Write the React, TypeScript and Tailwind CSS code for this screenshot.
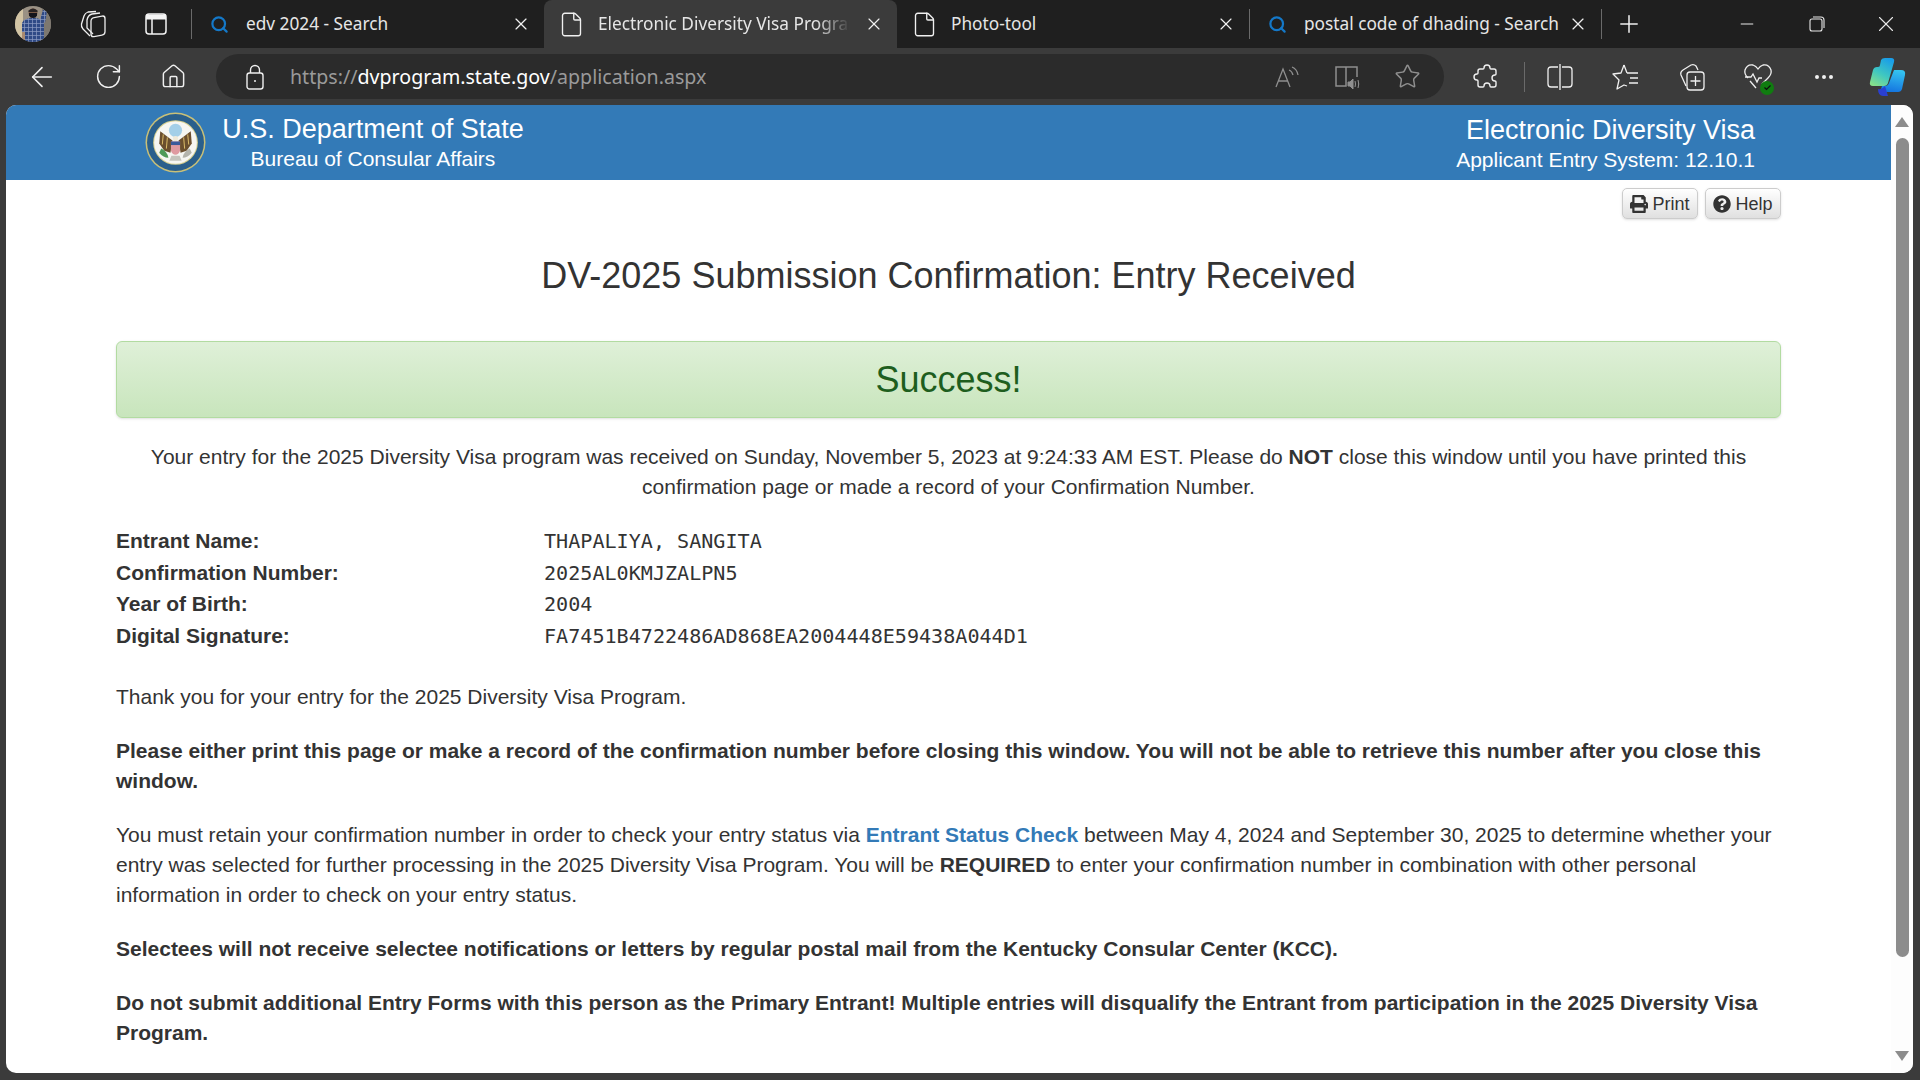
import React from 'react';
import { ArrowLeft, RotateCw, Home, Star, Search, X, Plus, Minus, File, Ellipsis } from 'lucide-react';
import { FaPrint, FaQuestionCircle } from 'react-icons/fa';

// Small tab shown in the browser strip
const Tab = ({ title, kind, width, active }: { title: string; kind: 'search' | 'file'; width: number; active?: boolean }) => (
  <div
    className={`relative flex h-12 shrink-0 items-center rounded-t-lg ${active ? 'bg-[#3b3b3b]' : ''}`}
    style={{ width }}
  >
    <div className="flex w-[54px] shrink-0 justify-center">
      {kind === 'search' ? (
        <Search className="h-[19px] w-[19px] text-[#1478c8]" strokeWidth={2.8} />
      ) : (
        <File className="h-[27px] w-[27px] text-[#f0f0f0]" strokeWidth={1.2} />
      )}
    </div>
    <span
      className={`min-w-0 flex-1 overflow-hidden whitespace-nowrap text-[17.25px] text-[#e6e6e6] ${active ? '[mask-image:linear-gradient(to_right,black_84%,transparent_97%)]' : ''}`}
    >
      {title}
    </span>
    <X className="ml-[6px] mr-[13px] h-[20px] w-[20px] shrink-0 text-[#f0f0f0]" strokeWidth={1.4} />
  </div>
);

const Sep = ({ h = 'h-[30px]' }: { h?: string }) => <div className={`w-px shrink-0 bg-[#6a6a6a] ${h}`} />;

const Box = ({ w, className = '', children }: { w: number; className?: string; children: React.ReactNode }) => (
  <div className={`flex shrink-0 items-center justify-center ${className}`} style={{ width: w }}>
    {children}
  </div>
);

const Avatar = () => (
  <svg width="36" height="36" viewBox="0 0 36 36">
    <defs>
      <clipPath id="av">
        <circle cx="18" cy="18" r="18" />
      </clipPath>
      <pattern id="plaid" width="4" height="4" patternUnits="userSpaceOnUse">
        <rect width="4" height="4" fill="#2f4a86" />
        <path d="M0 1.500h4M1.500 0v4" stroke="#8d9cc4" strokeWidth="0.7" />
      </pattern>
    </defs>
    <g clipPath="url(#av)">
      <rect width="36" height="36" fill="#9a9184" />
      <rect width="8" height="36" fill="#d2c4a4" />
      <rect x="27" width="9" height="36" fill="#7d7870" />
      <path d="M7 36V17q2-5 11-5t11 5v19z" fill="url(#plaid)" />
      <path d="M25 14l3-10 4 1-2 12z" fill="url(#plaid)" />
      <path d="M7 26h3v10H7z" fill="#a88a70" />
      <circle cx="18" cy="7" r="4.500" fill="#7b5a46" />
      <path d="M14 7h8v2.500q-1 2.500-4 2.500t-4-2.500z" fill="#15151c" />
      <path d="M13 5q5-5 10 0l-1 1h-8z" fill="#2a2424" />
    </g>
  </svg>
);

const Seal = () => (
  <svg width="61" height="61" viewBox="0 0 60 60">
    <circle cx="30" cy="30" r="29.500" fill="#c9c078" />
    <circle cx="30" cy="30" r="28" fill="#2a5f8c" />
    <circle cx="30" cy="30" r="22" fill="#d6cf8e" />
    <circle cx="30" cy="30" r="21" fill="#f6f6f2" />
    <circle cx="30" cy="18" r="6.500" fill="#a3cfe8" />
    <path d="M27 28 L15 19 L14 31 L19 38 L25 40z" fill="#6b4f2e" />
    <path d="M33 28 L45 19 L46 31 L41 38 L35 40z" fill="#6b4f2e" />
    <path d="M18 22l-1 10M22 25l-1 11M42 22l1 10M38 25l1 11" stroke="#d8b968" strokeWidth="1" />
    <circle cx="30" cy="26" r="2.500" fill="#efe9d8" />
    <path d="M25.500 29h9v9q-1.500 4-4.500 4t-4.500-4z" fill="#df9aa0" />
    <rect x="25.500" y="29" width="9" height="3.500" fill="#3a5a9a" />
    <path d="M16 36q6 3 7 9-5 0-9-5z" fill="#4f9a58" />
    <path d="M44 36q-6 3-7 9 5 0 9-5z" fill="#b4b4ac" />
    <path d="M26 43h8l2 5h-12z" fill="#c4c4bc" />
  </svg>
);

const Copilot = () => (
  <svg width="38" height="40" viewBox="0 0 38 40">
    <defs>
      <linearGradient id="cpL" x1="0.7" y1="0" x2="0.2" y2="1">
        <stop offset="0" stopColor="#1a9ee8" />
        <stop offset="0.55" stopColor="#40c8c0" />
        <stop offset="1" stopColor="#86e08a" />
      </linearGradient>
      <linearGradient id="cpR" x1="0.6" y1="0" x2="0.4" y2="1">
        <stop offset="0" stopColor="#35c4f0" />
        <stop offset="1" stopColor="#1474e0" />
      </linearGradient>
    </defs>
    <path d="M13 3q1-2 4-2h6q4 0 3 4l-6 21q-1 3-4 3H5q-4 0-3-4l3-12q1-3 4-3h1q2 0 2-2z" fill="url(#cpL)" />
    <path d="M26 13h7q5 0 4 5l-3 14q-1 3-4 3H15q-3 0-2-3l1-3h3q3 0 4-3z" fill="url(#cpR)" />
    <path d="M10 32q4 1 7-3l3 10h-5q-5 0-5-7z" fill="#2a3fd0" />
  </svg>
);

const Row = ({ label, value }: { label: string; value: string }) => (
  <div className="grid h-[31.5px] grid-cols-[428px_1fr] leading-[31.5px]">
    <b className="font-bold">{label}</b>
    <span className="pt-px font-['DejaVu_Sans_Mono',monospace] text-[20.1px]">{value}</span>
  </div>
);

export default function App() {
  return (
    <div className="flex h-[1080px] w-[1920px] flex-col overflow-hidden bg-[#3b3b3b] font-['Noto_Sans',sans-serif]">
      {/* tab strip */}
      <div className="flex h-12 shrink-0 items-center bg-[#1f1f1f]">
        <div className="ml-[15px] flex w-[36px] shrink-0">
          <Avatar />
        </div>
        <Box w={84}>
          <svg width="26" height="28" viewBox="0 0 26 28" fill="none" stroke="#efefef" strokeWidth="1.3">
            <path d="M10 26 L3 19 Q1 17 1.500 14 L4 6 Q5 3 8 2 L16 1.500" />
            <path d="M13 24 L7 18 L7 10 Q8 5 12 4 L20 3" />
            <rect x="11" y="7" width="14" height="19" rx="3" transform="skewY(-10) translate(0 3)" />
          </svg>
        </Box>
        <Box w={42}>
          <svg width="24" height="24" viewBox="0 0 24 24" fill="none" stroke="#f4f4f4" strokeWidth="1.5">
            <rect x="2" y="2" width="20" height="20" rx="3" />
            <path d="M2 5h20" strokeWidth="5" />
            <path d="M8 7v15" />
          </svg>
        </Box>
        <div className="ml-[14px]"><Sep /></div>
        <Tab title="edv 2024 - Search" kind="search" width={352} />
        <Tab title="Electronic Diversity Visa Program" kind="file" width={353} active />
        <Tab title="Photo-tool" kind="file" width={352} />
        <Sep />
        <Tab title="postal code of dhading - Search" kind="search" width={351} />
        <Sep />
        <Box w={54}>
          <Plus className="h-7 w-7 text-[#f0f0f0]" strokeWidth={1.3} />
        </Box>
        <div className="ml-[56px] flex">
          <Box w={70}>
            <Minus className="h-5 w-5 text-[#e8e8e8]" strokeWidth={1.2} />
          </Box>
          <Box w={69}>
            <svg width="16" height="16" viewBox="0 0 16 16" fill="none" stroke="#e8e8e8" strokeWidth="1.1">
              <rect x="1" y="3" width="12" height="12" rx="2" />
              <path d="M4 1h8q3 0 3 3v8" />
            </svg>
          </Box>
          <Box w={69}>
            <X className="h-[26px] w-[26px] text-[#e8e8e8]" strokeWidth={1} />
          </Box>
        </div>
      </div>

      {/* toolbar */}
      <div className="flex h-[57px] shrink-0 items-center pl-[9px] text-[#f0f0f0]">
        <Box w={66}><ArrowLeft className="h-8 w-8" strokeWidth={1.2} /></Box>
        <Box w={66}><RotateCw className="h-[29px] w-[29px]" strokeWidth={1.2} /></Box>
        <Box w={64}><Home className="h-[27px] w-[27px]" strokeWidth={1.3} /></Box>
        <div className="ml-[11px] flex h-[45px] w-[1228px] shrink-0 items-center rounded-full bg-[#2b2b2b]">
          <Box w={74} className="pl-[4px]">
            <svg width="18" height="26" viewBox="0 0 18 26" fill="none" stroke="currentColor" strokeWidth="1.4">
              <rect x="1" y="9" width="16" height="16" rx="2.500" />
              <path d="M4.500 9V6a4.500 4.500 0 0 1 9 0v3" />
              <circle cx="9" cy="17" r="1" fill="currentColor" stroke="none" />
            </svg>
          </Box>
          <div className="min-w-0 flex-1 whitespace-nowrap text-[19.6px] text-[#9a9a9a]">
            https://<span className="text-white">dvprogram.state.gov</span>/application.aspx
          </div>
          <div className="flex items-center pr-[7px] text-[#8f8f8f]">
            <Box w={60}>
              <svg width="26" height="26" viewBox="0 0 26 26" fill="none" stroke="currentColor" strokeWidth="1.300">
                <path d="M2 23 L9 5 L16 23 M4.500 17h9" />
                <path d="M15 6q3 1 4 5M18 3q5 2 6 8" />
              </svg>
            </Box>
            <Box w={60}>
              <svg width="28" height="28" viewBox="0 0 28 28" fill="none" stroke="currentColor" strokeWidth="1.500">
                <path d="M13 23H3V4h10v19zM13 4h11v10" />
                <path d="M15 19h2l3-3v10l-3-3h-2zM22 18q1 3 0 6M25 17q1.500 4 0 8" fill="currentColor" strokeWidth="1" />
              </svg>
            </Box>
            <Box w={60}><Star className="h-[27px] w-[27px]" strokeWidth={1.3} /></Box>
          </div>
        </div>
        <Box w={80} className="pl-[6px]">
          <svg width="28" height="28" viewBox="0 0 28 28" fill="none" stroke="currentColor" strokeWidth="1.400">
            <path d="M11 5a3 3 0 0 1 6 0q0 1 1 1h3q2 0 2 2v3q0 1-1 1a3 3 0 0 0 0 6q1 0 1 1v3q0 2-2 2h-3q-1 0-1-1a3 3 0 0 0-6 0q0 1-1 1H7q-2 0-2-2v-4q0-1-1-1a3 3 0 0 1 0-6q1 0 1-1V8q0-2 2-2h3q1 0 1-1z" />
          </svg>
        </Box>
        <Sep />
        <Box w={70}>
          <svg width="26" height="28" viewBox="0 0 26 28" fill="none" stroke="currentColor" strokeWidth="1.300">
            <path d="M11 4H4Q1 4 1 7v14q0 3 3 3h7M15 4h7q3 0 3 3v14q0 3-3 3h-7M13 1v26" />
          </svg>
        </Box>
        <Box w={62}>
          <svg width="28" height="28" viewBox="0 0 28 28" fill="none" stroke="currentColor" strokeWidth="1.300">
            <path d="M12 2l3 8M12 2L9 10 1 11l6 6-2 9 7-4 3 1" strokeLinejoin="round" />
            <path d="M15 10h11M18 15h8M17 20h9" />
          </svg>
        </Box>
        <Box w={70}>
          <svg width="28" height="30" viewBox="0 0 28 30" fill="none" stroke="currentColor" strokeWidth="1.300">
            <path d="M8 24 L3 13 Q2 10 5 8 L13 3 Q16 2 18 4 L20 8" />
            <rect x="9" y="10" width="17" height="18" rx="3" />
            <path d="M17.500 14v10M12.500 19h10" />
          </svg>
        </Box>
        <Box w={62}>
          <div className="relative h-[30px] w-[30px]">
            <svg width="30" height="30" viewBox="0 0 30 30" fill="none" stroke="currentColor" strokeWidth="1.300">
              <path d="M5 16Q1 12 2 8 4 2 10 3q3 1 5 4 2-3 5-4 6-1 8 5 1 4-3 8l-6 6" />
              <path d="M2 15h6l2-3 4 8 2-4h3" />
              <path d="M7 19l6 7" />
            </svg>
            <div className="absolute bottom-[-3px] right-[-1px] flex h-[14px] w-[14px] items-center justify-center rounded-full bg-[#107c10]">
              <svg width="9" height="9" viewBox="0 0 9 9" fill="none" stroke="#0d0d0d" strokeWidth="1.200"><path d="M1.500 4.500l2 2 4-4" /></svg>
            </div>
          </div>
        </Box>
        <Box w={70}><Ellipsis className="h-6 w-6" strokeWidth={2} /></Box>
        <Box w={56}><Copilot /></Box>
      </div>

      {/* page */}
      <div className="mb-[7px] ml-[6px] flex min-h-0 w-[1907px] flex-1 overflow-hidden rounded-[10px] bg-white font-['Liberation_Sans',Arial,sans-serif] text-[21px] leading-[30px] text-[#333333]">
        <div className="min-w-0 flex-1">
          <header className="flex h-[75px] items-start bg-[#337ab7] text-white">
            <div className="ml-[139px] mt-[7px]"><Seal /></div>
            <div className="ml-[16px] flex w-[302px] flex-col items-center">
              <div className="mt-[6px] text-[27px] leading-[36px]">U.S. Department of State</div>
              <div className="text-[21px] leading-[24px]">Bureau of Consular Affairs</div>
            </div>
            <div className="ml-auto mr-[136px] flex flex-col items-end">
              <div className="mt-[7px] text-[27px] leading-[36px]">Electronic Diversity Visa</div>
              <div className="text-[21px] leading-[24px]">Applicant Entry System: 12.10.1</div>
            </div>
          </header>

          <main className="mx-auto w-[1665px]">
            <div className="mt-2 flex justify-end gap-[7px]">
              <button className="flex h-[31px] w-[76px] items-center justify-center gap-[4px] rounded-[5px] border border-[#cccccc] bg-gradient-to-b from-white to-[#e0e0e0] text-[18px] leading-none shadow-sm">
                <FaPrint className="h-[18px] w-[18px]" /> Print
              </button>
              <button className="flex h-[31px] w-[76px] items-center justify-center gap-[4px] rounded-[5px] border border-[#cccccc] bg-gradient-to-b from-white to-[#e0e0e0] text-[18px] leading-none shadow-sm">
                <FaQuestionCircle className="h-[18px] w-[18px]" /> Help
              </button>
            </div>

            <h1 className="mb-[45px] mt-[37px] text-center text-[36px] leading-[40px]">DV-2025 Submission Confirmation: Entry Received</h1>

            <div className="flex h-[77px] items-center justify-center rounded-[6px] border border-[#b2dba1] bg-gradient-to-b from-[#dff0d8] to-[#c8e5bc] text-[36px] text-[#1e5e1e] shadow-sm">
              Success!
            </div>

            <p className="mt-[24px] px-4 text-center">
              Your entry for the 2025 Diversity Visa program was received on Sunday, November 5, 2023 at 9:24:33 AM EST. Please do <b>NOT</b> close this window until you have printed this confirmation page or made a record of your Confirmation Number.
            </p>

            <div className="mt-[23px]">
              <Row label="Entrant Name:" value="THAPALIYA, SANGITA" />
              <Row label="Confirmation Number:" value="2025AL0KMJZALPN5" />
              <Row label="Year of Birth:" value="2004" />
              <Row label="Digital Signature:" value="FA7451B4722486AD868EA2004448E59438A044D1" />
            </div>

            <p className="mt-[31px]">Thank you for your entry for the 2025 Diversity Visa Program.</p>
            <p className="mt-[24px] font-bold">
              Please either print this page or make a record of the confirmation number before closing this window. You will not be able to retrieve this number after you close this window.
            </p>
            <p className="mt-[24px]">
              You must retain your confirmation number in order to check your entry status via <a className="font-bold text-[#337ab7]">Entrant Status Check</a> between May 4, 2024 and September 30, 2025 to determine whether your entry was selected for further processing in the 2025 Diversity Visa Program. You will be <b>REQUIRED</b> to enter your confirmation number in combination with other personal information in order to check on your entry status.
            </p>
            <p className="mt-[24px] font-bold">
              Selectees will not receive selectee notifications or letters by regular postal mail from the Kentucky Consular Center (KCC).
            </p>
            <p className="mt-[24px] font-bold">
              Do not submit additional Entry Forms with this person as the Primary Entrant! Multiple entries will disqualify the Entrant from participation in the 2025 Diversity Visa Program.
            </p>
          </main>
        </div>

        {/* scrollbar */}
        <div className="flex w-[22px] shrink-0 flex-col items-center bg-[#fdfdfd]">
          <svg className="mt-[12px]" width="14" height="10" viewBox="0 0 14 10"><path d="M7 0l7 10H0z" fill="#8c8c8c" /></svg>
          <div className="mt-[11px] h-[819px] w-[13px] rounded-full bg-[#8c8c8c]" />
          <svg className="mt-[94px]" width="14" height="10" viewBox="0 0 14 10"><path d="M7 10L0 0h14z" fill="#8c8c8c" /></svg>
        </div>
      </div>
    </div>
  );
}
